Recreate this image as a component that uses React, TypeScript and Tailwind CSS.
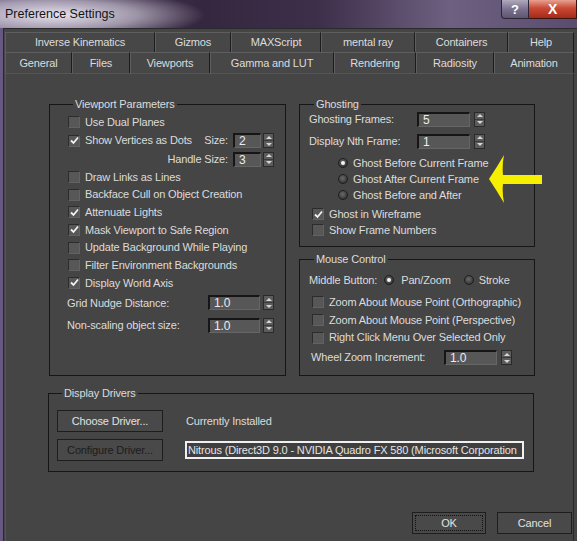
import React from 'react'

const topTabs = [
  { label: 'Inverse Kinematics', w: 'w-[150px]' },
  { label: 'Gizmos', w: 'w-[76px]' },
  { label: 'MAXScript', w: 'w-[90px]' },
  { label: 'mental ray', w: 'w-[94px]' },
  { label: 'Containers', w: 'w-[93px]' },
  { label: 'Help', w: 'w-[66px]' },
]

const bottomTabs = [
  { label: 'General', w: 'w-[67px]' },
  { label: 'Files', w: 'w-[58px]' },
  { label: 'Viewports', w: 'w-[80px]' },
  { label: 'Gamma and LUT', w: 'w-[124px]' },
  { label: 'Rendering', w: 'w-[82px]' },
  { label: 'Radiosity', w: 'w-[78px]' },
  { label: 'Animation', w: 'w-[80px]' },
]

const viewportChecks = [
  { label: 'Draw Links as Lines', on: false },
  { label: 'Backface Cull on Object Creation', on: false },
  { label: 'Attenuate Lights', on: true },
  { label: 'Mask Viewport to Safe Region', on: true },
  { label: 'Update Background While Playing', on: false },
  { label: 'Filter Environment Backgrounds', on: false },
  { label: 'Display World Axis', on: true },
]

function Check({ on }: { on?: boolean }) {
  return (
    <div className="w-[12px] h-[12px] shrink-0 bg-[#575757] border-t border-l border-[#2c2c2c] border-b border-r border-b-[#626262] border-r-[#626262] flex items-center justify-center">
      {on ? (
        <svg width="9" height="9" viewBox="0 0 9 9">
          <path d="M1 4.5 L3.5 7 L8 1.5" stroke="#f2f2f2" strokeWidth="1.8" fill="none" />
        </svg>
      ) : null}
    </div>
  )
}

function Radio({ on }: { on?: boolean }) {
  return (
    <div className="w-[10px] h-[10px] shrink-0 rounded-full bg-[radial-gradient(circle_at_45%_40%,#6a6a6a,#262626)] border border-[#1e1e1e] flex items-center justify-center">
      {on ? <div className="w-[4px] h-[4px] rounded-full bg-[#f4f4f4]" /> : null}
    </div>
  )
}

function Arrows() {
  return (
    <div className="w-[11px] h-[15px] shrink-0 bg-[#5c5c5c] border border-[#2a2a2a] flex flex-col">
      <div className="flex-1 flex items-center justify-center border-b border-[#3a3a3a]">
        <div className="w-0 h-0 border-l-[3px] border-r-[3px] border-b-[3px] border-l-transparent border-r-transparent border-b-[#d6d6d6]" />
      </div>
      <div className="flex-1 flex items-center justify-center">
        <div className="w-0 h-0 border-l-[3px] border-r-[3px] border-t-[3px] border-l-transparent border-r-transparent border-t-[#d6d6d6]" />
      </div>
    </div>
  )
}

function Spinner({ value, w, gap = 'gap-[3px]' }: { value: string; w: string; gap?: string }) {
  return (
    <div className={`flex items-center ${gap}`}>
      <div className={`${w} h-[15px] bg-[#575757] border-t-2 border-l-2 border-[#161616] border-b border-r border-b-[#666] border-r-[#666] pl-[4px] text-[12px] leading-[12px] text-[#ececec]`}>
        {value}
      </div>
      <Arrows />
    </div>
  )
}

function CheckRow({ label, on, h = 'h-[17.7px]' }: { label: string; on?: boolean; h?: string }) {
  return (
    <div className={`${h} flex items-center gap-[5px]`}>
      <Check on={on} />
      <span>{label}</span>
    </div>
  )
}

function Group({ title, className, children }: { title: string; className?: string; children: React.ReactNode }) {
  return (
    <fieldset className={`border border-[#161616] ${className ?? ''}`}>
      <legend className="ml-[5px] px-[2px] leading-[13px]">{title}</legend>
      {children}
    </fieldset>
  )
}

export default function App() {
  return (
    <div className="relative w-[577px] h-[541px] overflow-hidden bg-[#665783] flex flex-col font-['Liberation_Sans',Arial,sans-serif] text-[11px] tracking-[-0.15px] text-[#dcdcdc]">
      {/* title bar */}
      <div className="h-[28px] shrink-0 flex items-start justify-between bg-[radial-gradient(ellipse_150px_26px_at_55px_15px,rgba(236,232,242,0.97),rgba(236,232,242,0.55)_55%,rgba(236,232,242,0)),linear-gradient(90deg,#4d3d62,#35273f_35%,#3d2f4a_55%,#6e6080_78%,#5a4c6c)]">
        <div className="pl-[5px] pt-[6px] text-[12.5px] tracking-normal text-[#141414] leading-[16px]">Preference Settings</div>
        <div className="flex">
          <div className="w-[28px] h-[19px] rounded-bl-[4px] border border-[#2d2535] border-t-0 bg-[linear-gradient(#b0a9bb,#7b7290_50%,#5e556f)] flex items-center justify-center text-[13px] font-bold text-white leading-none">
            ?
          </div>
          <div className="w-[48px] h-[19px] border border-[#3a1410] border-t-0 border-l-0 bg-[linear-gradient(#e8a090,#c94a35_45%,#a52a18)] flex items-center justify-center text-[14px] font-bold text-white leading-none">
            X
          </div>
        </div>
      </div>

      {/* body */}
      <div className="flex-1 ml-[3px] bg-[#454545] border-l border-t border-[#2a2a2a] pt-[3px] flex flex-col">
        <div className="flex pl-[1px]">
          {topTabs.map((t) => (
            <div key={t.label} className={`${t.w} h-[20px] flex items-center justify-center border-t border-l border-[#5e5e5e] border-r border-r-[#1c1c1c] bg-[#474747]`}>
              {t.label}
            </div>
          ))}
        </div>
        <div className="flex pl-[1px]">
          {bottomTabs.map((t) => (
            <div key={t.label} className={`${t.w} h-[21px] flex items-center justify-center border-t border-l border-[#5e5e5e] border-r border-r-[#1c1c1c] bg-[#474747]`}>
              {t.label}
            </div>
          ))}
        </div>

        {/* tab page */}
        <div className="flex-1 ml-[1px] w-[569px] border-l border-t border-[#555] border-r border-r-[#2a2a2a] pt-[24px] pl-[43px]">
          <div className="flex items-stretch gap-[13px]">
            <Group title="Viewport Parameters" className="w-[237px] pl-[18px] pr-[11px] pt-[2px]">
              <CheckRow label="Use Dual Planes" h="h-[18px]" />
              <div className="h-[19px] flex items-center">
                <Check on />
                <span className="ml-[5px]">Show Vertices as Dots</span>
                <span className="ml-auto mr-[5px]">Size:</span>
                <Spinner value="2" w="w-[28px]" gap="gap-[2px]" />
              </div>
              <div className="h-[18px] flex items-center justify-end">
                <span className="mr-[5px]">Handle Size:</span>
                <Spinner value="3" w="w-[28px]" gap="gap-[2px]" />
              </div>
              {viewportChecks.map((c) => (
                <CheckRow key={c.label} label={c.label} on={c.on} />
              ))}
              <div className="h-[22px] flex items-center -ml-[1px]">
                <span>Grid Nudge Distance:</span>
                <div className="ml-auto">
                  <Spinner value="1.0" w="w-[52px]" />
                </div>
              </div>
              <div className="h-[23px] flex items-center -ml-[1px]">
                <span>Non-scaling object size:</span>
                <div className="ml-auto">
                  <Spinner value="1.0" w="w-[52px]" />
                </div>
              </div>
            </Group>

            <div className="w-[236px] flex flex-col gap-[6px]">
              <Group title="Ghosting" className="pl-[9px] pb-[8px]">
                <div className="h-[22px] -mt-[3px] flex items-center">
                  <span className="w-[108px]">Ghosting Frames:</span>
                  <Spinner value="5" w="w-[53px]" gap="gap-[4px]" />
                </div>
                <div className="h-[22px] flex items-center">
                  <span className="w-[108px]">Display Nth Frame:</span>
                  <Spinner value="1" w="w-[53px]" gap="gap-[4px]" />
                </div>
                <div className="pl-[29px] pt-[3px]">
                  {['Ghost Before Current Frame', 'Ghost After Current Frame', 'Ghost Before and After'].map((l, i) => (
                    <div key={l} className="h-[16px] flex items-center gap-[5px]">
                      <Radio on={i === 0} />
                      <span>{l}</span>
                    </div>
                  ))}
                </div>
                <div className="pl-[3px] pt-[3px]">
                  <CheckRow label="Ghost in Wireframe" on h="h-[16px]" />
                  <CheckRow label="Show Frame Numbers" h="h-[16px]" />
                </div>
              </Group>

              <Group title="Mouse Control" className="pl-[9px] pb-[6px] pt-[4px]">
                <div className="h-[20px] flex items-center">
                  <span>Middle Button:</span>
                  <div className="ml-[7px]"><Radio on /></div>
                  <span className="ml-[7px]">Pan/Zoom</span>
                  <div className="ml-[13px]"><Radio /></div>
                  <span className="ml-[5px]">Stroke</span>
                </div>
                <div className="pl-[3px] pt-[3px]">
                  <CheckRow label="Zoom About Mouse Point (Orthographic)" h="h-[18px]" />
                  <CheckRow label="Zoom About Mouse Point (Perspective)" h="h-[18px]" />
                  <CheckRow label="Right Click Menu Over Selected Only" h="h-[17px]" />
                </div>
                <div className="h-[23px] flex items-center pl-[2px]">
                  <span className="w-[133px]">Wheel Zoom Increment:</span>
                  <Spinner value="1.0" w="w-[53px]" gap="gap-[4px]" />
                </div>
              </Group>
            </div>
          </div>

          <Group title="Display Drivers" className="mt-[11px] -ml-[1px] w-[486px] pl-[8px] pt-[10px] pb-[10px]">
            <div className="flex flex-col gap-[7px]">
              <div className="flex items-center">
                <button className="w-[106px] h-[22px] border border-[#1e1e1e] bg-[#494949] text-[#e2e2e2]">Choose Driver...</button>
                <span className="ml-[23px]">Currently Installed</span>
              </div>
              <div className="flex items-center">
                <button className="w-[106px] h-[22px] border border-[#1e1e1e] bg-[#494949] text-[#1c1c1c]">Configure Driver...</button>
                <div className="ml-[22px] w-[339px] h-[18px] border-2 border-[#f0f0f0] bg-[#3f3f3f] text-[#e4e4e4] leading-[14px] pl-[1px] whitespace-nowrap overflow-hidden">
                  Nitrous (Direct3D 9.0 - NVIDIA Quadro FX 580 (Microsoft Corporation
                </div>
              </div>
            </div>
          </Group>

          <div className="flex justify-end gap-[11px] mt-[40px] pr-[1px]">
            <button className="w-[74px] h-[22px] border border-[#1e1e1e] bg-[#494949] p-[2px]">
              <div className="w-full h-full border border-dotted border-[#111] flex items-center justify-center text-[#e2e2e2]">OK</div>
            </button>
            <button className="w-[75px] h-[22px] border border-[#1e1e1e] bg-[#494949] text-[#e2e2e2]">Cancel</button>
          </div>
        </div>
      </div>

      {/* yellow annotation arrow */}
      <svg className="absolute left-[487px] top-[153px]" width="58" height="52" viewBox="0 0 58 52">
        <path d="M2 26 Q10 14 17 2 Q15 12 16 22 L55 22 L55 31 L16 31 Q15 40 17 50 Q10 38 2 26 Z" fill="#f7ef00" />
      </svg>
    </div>
  )
}
